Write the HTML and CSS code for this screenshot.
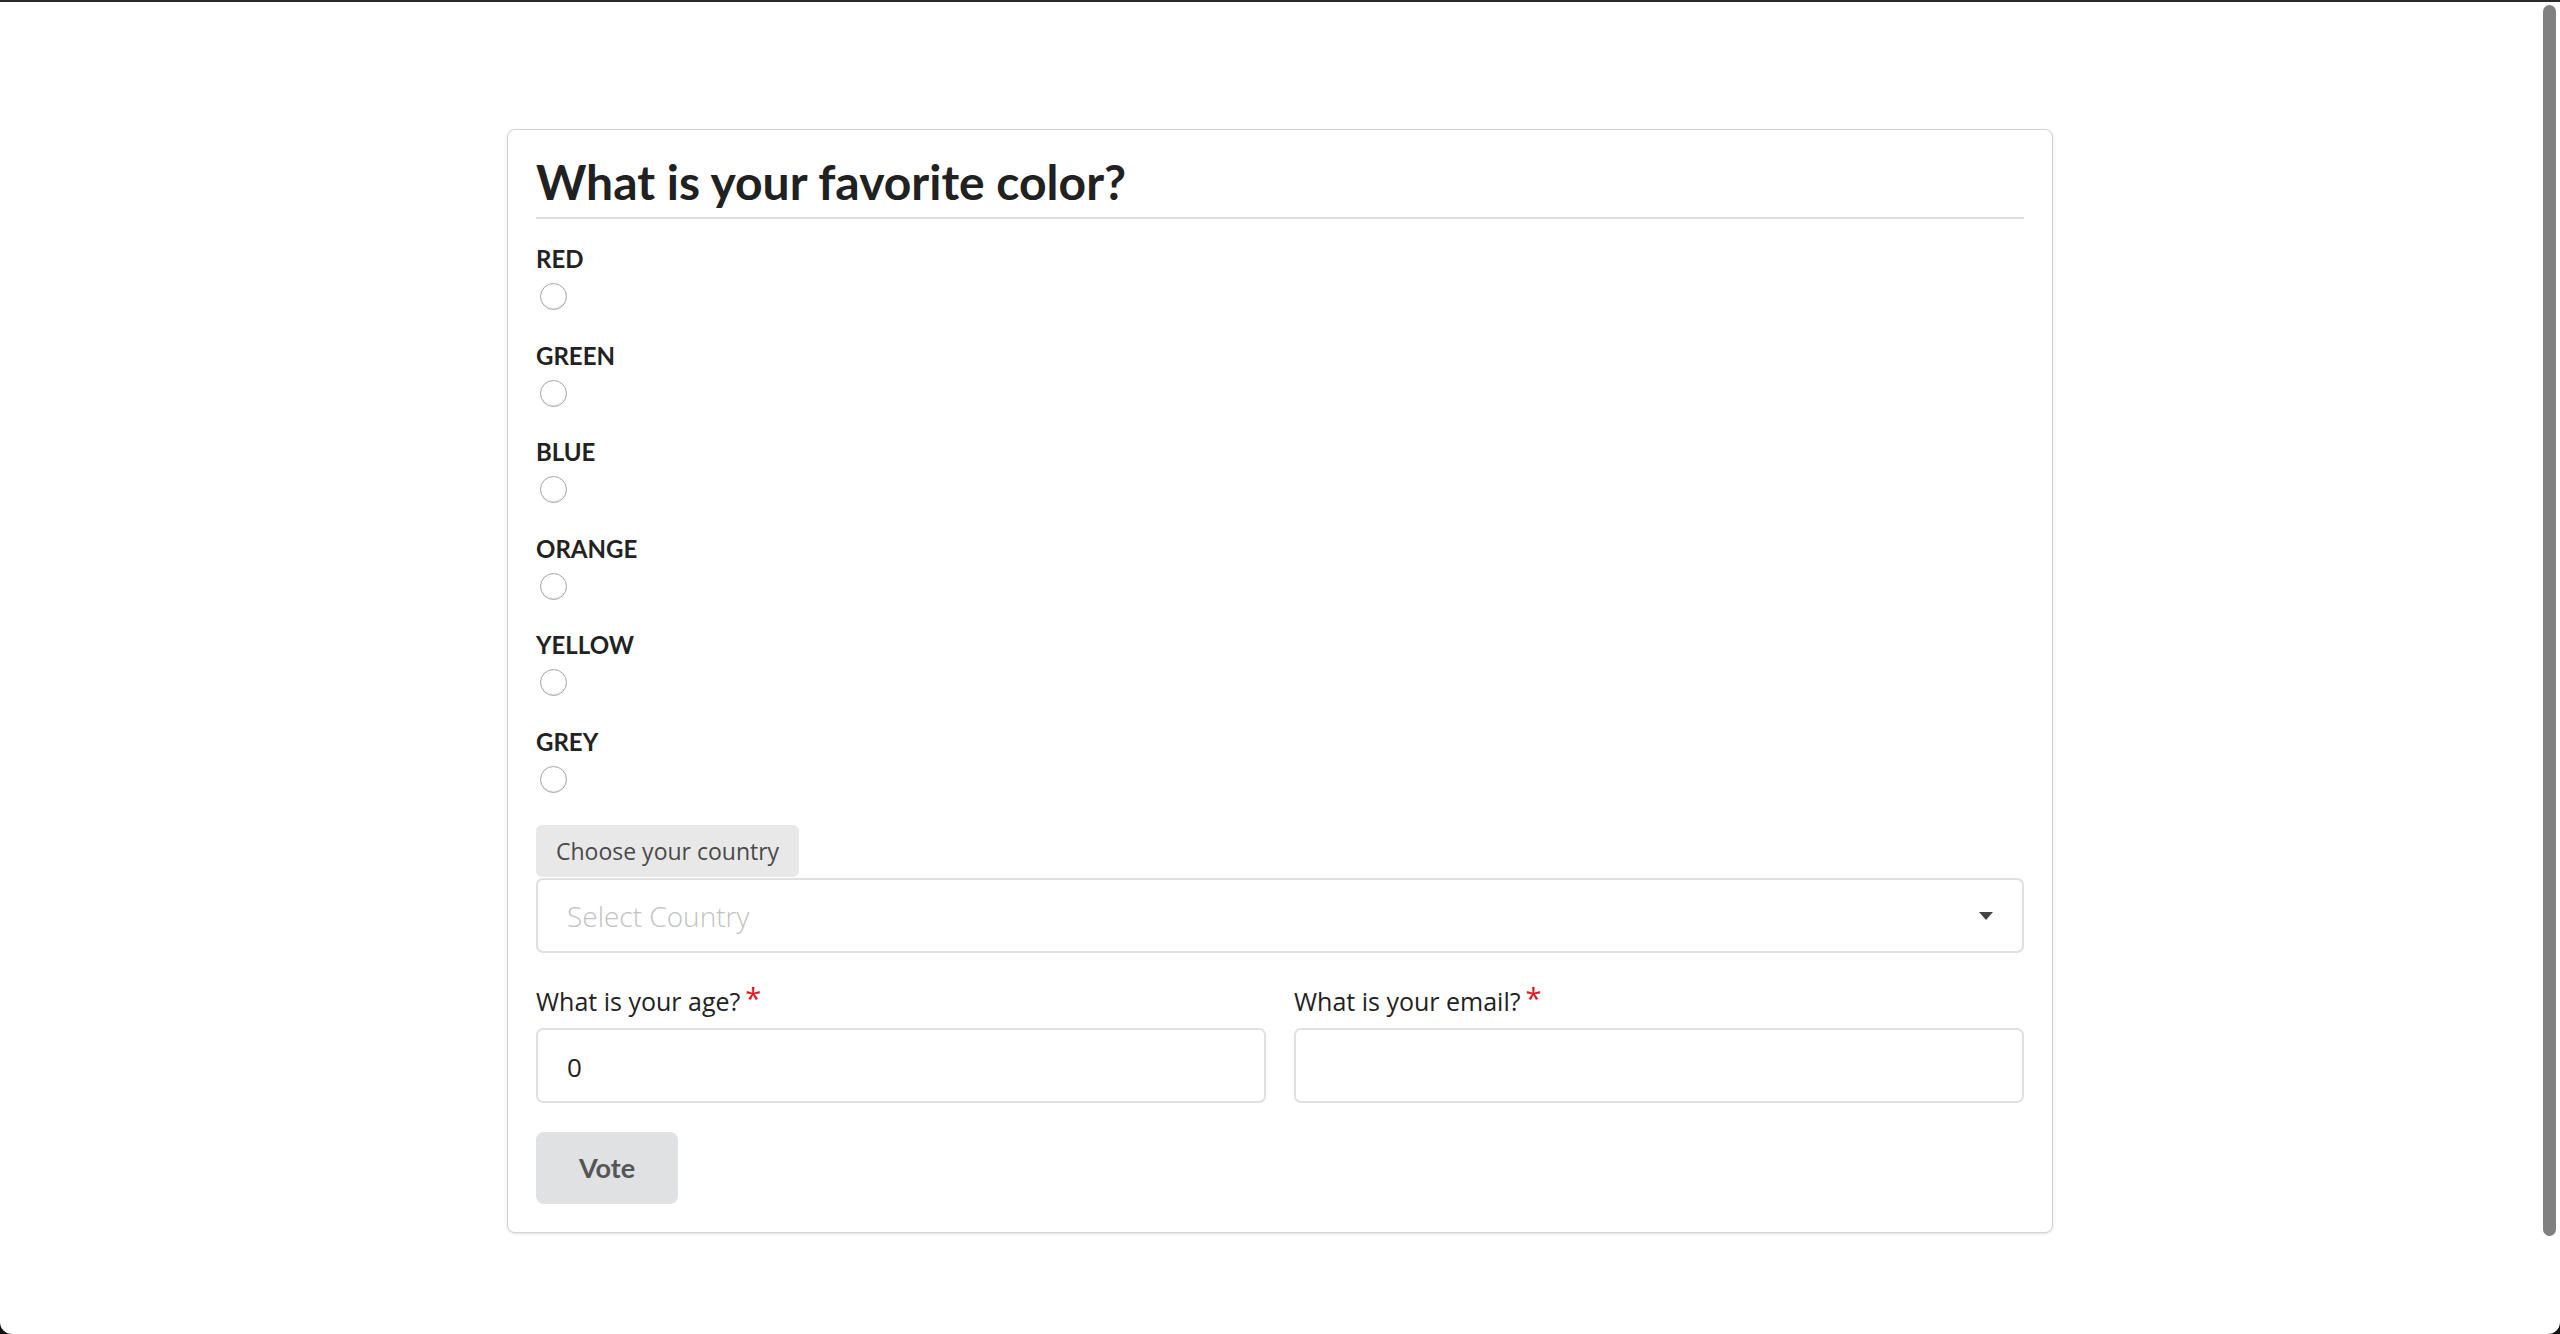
FILE: index.html
```
<!DOCTYPE html>
<html lang="en">
<head>
<meta charset="utf-8">
<title>Poll</title>
<link rel="stylesheet" href="styles.css">
</head>
<body>
<div class="window-frame"></div>
<div class="scroll-thumb"></div>
<main class="card">
  <h1 class="title">What is your favorite color?</h1>
  <div class="options">
    <div class="option"><label class="option-label">RED</label><input class="radio" type="radio" name="color"></div>
    <div class="option"><label class="option-label">GREEN</label><input class="radio" type="radio" name="color"></div>
    <div class="option"><label class="option-label">BLUE</label><input class="radio" type="radio" name="color"></div>
    <div class="option"><label class="option-label">ORANGE</label><input class="radio" type="radio" name="color"></div>
    <div class="option"><label class="option-label">YELLOW</label><input class="radio" type="radio" name="color"></div>
    <div class="option"><label class="option-label">GREY</label><input class="radio" type="radio" name="color"></div>
  </div>
  <div class="country">
    <div class="chip">Choose your country</div>
    <div class="select">
      <span class="placeholder">Select Country</span>
      <span class="caret"></span>
    </div>
  </div>
  <div class="fields">
    <div class="field">
      <div class="field-label">What is your age?<span class="req">*</span></div>
      <div class="input">0</div>
    </div>
    <div class="field">
      <div class="field-label">What is your email?<span class="req">*</span></div>
      <div class="input"></div>
    </div>
  </div>
  <button class="vote">Vote</button>
</main>
</body>
</html>
```
FILE: styles.css
```
html, body {
  margin: 0;
  padding: 0;
  background: #ffffff;
  overflow: hidden;
}

body {
  font-family: "Open Sans", "Liberation Sans", sans-serif;
  color: #222222;
  height: 1334px;
}

.window-frame {
  position: fixed;
  left: 0;
  top: 0;
  right: 0;
  bottom: 0;
  border-top: 2px solid #2a2a2a;
  border-radius: 0 0 12px 12px;
  box-shadow: 0 0 0 30px #111111;
  pointer-events: none;
  z-index: 10;
}

.scroll-thumb {
  position: fixed;
  right: 4px;
  top: 5px;
  width: 13px;
  height: 1231px;
  border-radius: 7px;
  background: #808080;
  z-index: 11;
}

.card {
  box-sizing: border-box;
  width: 1546px;
  margin: 129px auto 0;
  padding: 28px 28px 28px 28px;
  border: 1px solid #d2d2d2;
  border-radius: 8px;
  box-shadow: 0 1px 3px rgba(0, 0, 0, 0.12);
  background: #ffffff;
}

.title {
  margin: 0;
  font-family: Lato, "Liberation Sans", sans-serif;
  font-weight: 700;
  font-size: 48px;
  line-height: 48px;
  color: #212121;
  padding-bottom: 11px;
  border-bottom: 2px solid #dedede;
}

.options {
  margin-top: 27px;
}

.option {
  display: flex;
  flex-direction: column;
  align-items: flex-start;
  margin-bottom: 32.6px;
}

.option:last-child {
  margin-bottom: 31.6px;
}

.option-label {
  font-family: Lato, "Liberation Sans", sans-serif;
  font-weight: 700;
  font-size: 24px;
  line-height: 26px;
  color: #222222;
}

.radio {
  appearance: none;
  -webkit-appearance: none;
  margin: 11px 0 0 4px;
  width: 27px;
  height: 27px;
  box-sizing: border-box;
  border: 1px solid #a4a4a4;
  border-radius: 50%;
  background: #ffffff;
  box-shadow: inset 0 -1px 1px rgba(0, 0, 0, 0.1);
}

.country {
  margin-top: 0;
}

.chip {
  display: inline-block;
  height: 52px;
  line-height: 52px;
  padding: 0 20px;
  font-size: 23px;
  color: #4a4a4a;
  background: #e8e8e8;
  border-radius: 6px;
  vertical-align: top;
}

.select {
  box-sizing: border-box;
  height: 75px;
  margin-top: 1px;
  border: 2px solid #e0e0e0;
  border-radius: 7px;
  display: flex;
  align-items: center;
  justify-content: space-between;
  padding: 2px 29px 0 29px;
}

.placeholder {
  font-size: 28px;
  font-weight: 300;
  color: #c2c2c2;
}

.caret {
  width: 0;
  height: 0;
  border-left: 7px solid transparent;
  border-right: 7px solid transparent;
  border-top: 8px solid #444444;
}

.fields {
  display: grid;
  grid-template-columns: 1fr 1fr;
  column-gap: 28px;
  margin-top: 31px;
}

.field-label {
  font-size: 25px;
  color: #222222;
}

.req {
  color: #e0141e;
  font-size: 29px;
  line-height: 0;
  margin-left: 5px;
  position: relative;
  top: -2px;
}

.input {
  box-sizing: border-box;
  height: 75px;
  margin-top: 10px;
  border: 2px solid #e0e0e0;
  border-radius: 7px;
  display: flex;
  align-items: center;
  padding: 3px 29px 0;
  font-size: 26px;
  color: #222222;
}

.vote {
  display: block;
  margin-top: 29px;
  width: 142px;
  height: 72px;
  border: none;
  border-radius: 8px;
  background: #e0e1e3;
  font-family: Lato, "Liberation Sans", sans-serif;
  font-weight: 700;
  font-size: 27px;
  color: #555555;
  padding: 0;
}
```
